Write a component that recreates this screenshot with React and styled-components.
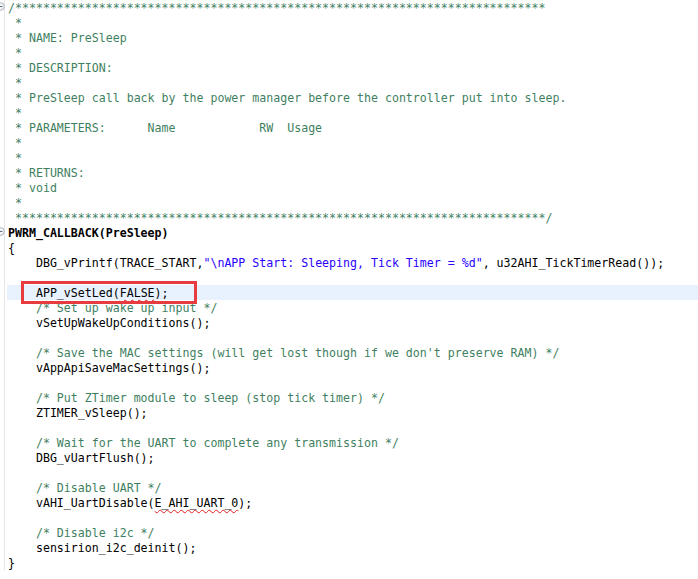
import React from "react";
import styled, { createGlobalStyle } from "styled-components";

const GlobalStyle = createGlobalStyle`
  html, body {
    margin: 0;
    padding: 0;
    background: #ffffff;
  }
`;

const Editor = styled.div`
  width: 698px;
  height: 579px;
  overflow: hidden;
  background: #ffffff;
  font-family: "DejaVu Sans Mono", "Liberation Mono", monospace;
  font-size: 11.6px;
  color: #000000;
`;

const Row = styled.div`
  display: flex;
  height: 15px;
  line-height: 15px;
`;

const Gutter = styled.div`
  position: relative;
  flex: 0 0 4px;
  border-right: 1px solid #e6e6e6;
  margin-right: 2px;
`;

const Fold = styled.svg`
  position: absolute;
  left: -4px;
  top: 2px;
`;

const Code = styled.div`
  position: relative;
  flex: 1;
  box-sizing: border-box;
  padding: 1px 0 0 1px;
  white-space: pre;
  background: ${(p) => (p.$current ? "#e8f2fe" : "transparent")};
  font-weight: ${(p) => (p.$bold ? 700 : 400)};
`;

const Token = styled.span`
  color: ${(p) =>
    p.$kind === "comment" ? "#3f7f5f" : p.$kind === "string" ? "#2a00ff" : "#000000"};
  ${(p) =>
    p.$error &&
    `text-decoration: underline wavy #e41f1f;
     text-decoration-thickness: 1px;
     text-underline-offset: 2px;
     text-decoration-skip-ink: none;`}
`;

const Callout = styled.div`
  position: absolute;
  left: 14px;
  top: -4px;
  width: 170px;
  height: 17px;
  border: 3px solid #e63b3f;
  z-index: 2;
`;

const stars = "*".repeat(76);

const c = (t) => ["comment", t];
const p = (t) => ["plain", t];
const s = (t) => ["string", t];
const e = (t) => ["error", t];

const lines = [
  { tokens: [c("/" + stars)], fold: true },
  { tokens: [c(" *")] },
  { tokens: [c(" * NAME: PreSleep")] },
  { tokens: [c(" *")] },
  { tokens: [c(" * DESCRIPTION:")] },
  { tokens: [c(" *")] },
  { tokens: [c(" * PreSleep call back by the power manager before the controller put into sleep.")] },
  { tokens: [c(" *")] },
  { tokens: [c(" * PARAMETERS:      Name            RW  Usage")] },
  { tokens: [c(" *")] },
  { tokens: [c(" *")] },
  { tokens: [c(" * RETURNS:")] },
  { tokens: [c(" * void")] },
  { tokens: [c(" *")] },
  { tokens: [c(" " + stars + "/")] },
  { tokens: [p("PWRM_CALLBACK(PreSleep)")], fold: true, bold: true },
  { tokens: [p("{")] },
  {
    tokens: [
      p("    DBG_vPrintf(TRACE_START,"),
      s('"\\nAPP Start: Sleeping, Tick Timer = %d"'),
      p(", u32AHI_TickTimerRead());"),
    ],
  },
  { tokens: [] },
  { tokens: [p("    APP_vSetLed("), e("FALSE"), p(");")], current: true, callout: true },
  { tokens: [c("    /* Set up wake up input */")] },
  { tokens: [p("    vSetUpWakeUpConditions();")] },
  { tokens: [] },
  { tokens: [c("    /* Save the MAC settings (will get lost though if we don't preserve RAM) */")] },
  { tokens: [p("    vAppApiSaveMacSettings();")] },
  { tokens: [] },
  { tokens: [c("    /* Put ZTimer module to sleep (stop tick timer) */")] },
  { tokens: [p("    ZTIMER_vSleep();")] },
  { tokens: [] },
  { tokens: [c("    /* Wait for the UART to complete any transmission */")] },
  { tokens: [p("    DBG_vUartFlush();")] },
  { tokens: [] },
  { tokens: [c("    /* Disable UART */")] },
  { tokens: [p("    vAHI_UartDisable("), e("E_AHI_UART_0"), p(");")] },
  { tokens: [] },
  { tokens: [c("    /* Disable i2c */")] },
  { tokens: [p("    sensirion_i2c_deinit();")] },
  { tokens: [p("}")] },
];

const FoldIcon = () => (
  <Fold width="9" height="9" viewBox="0 0 9 9">
    <circle cx="4.5" cy="4.5" r="3.8" fill="#f4f4f4" stroke="#a9b4c2" strokeWidth="1" />
    <line x1="2.6" y1="4.5" x2="6.4" y2="4.5" stroke="#5d6d82" strokeWidth="1" />
  </Fold>
);

const App = () => (
  <Editor>
    <GlobalStyle />
    {lines.map((line, i) => (
      <Row key={i}>
        <Gutter>{line.fold && <FoldIcon />}</Gutter>
        <Code $current={line.current} $bold={line.bold}>
          {line.tokens.length === 0
            ? " "
            : line.tokens.map(([kind, text], j) => (
                <Token key={j} $kind={kind} $error={kind === "error"}>
                  {text}
                </Token>
              ))}
          {line.callout && <Callout />}
        </Code>
      </Row>
    ))}
  </Editor>
);

export default App;
